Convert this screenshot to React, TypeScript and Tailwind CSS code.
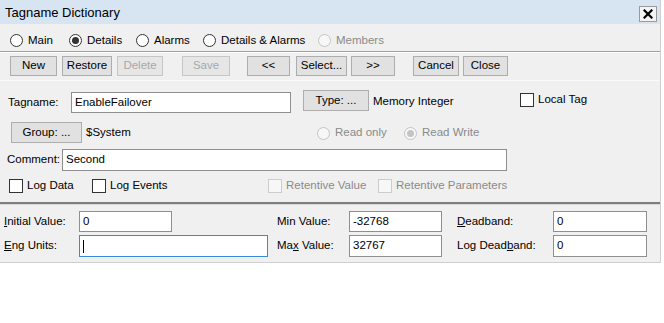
import React from "react";

function Radio({ checked = false, disabled = false, label, cls }: { checked?: boolean; disabled?: boolean; label: string; cls: string }) {
  return (
    <div className={`flex items-center ${cls}`}>
      <div
        className={
          disabled
            ? "w-[13px] h-[13px] rounded-full border border-[#c4c4c4] bg-[#f7f7f7] flex items-center justify-center"
            : "w-[13px] h-[13px] rounded-full border border-[#333333] bg-white flex items-center justify-center"
        }
      >
        {checked && (
          <div className={disabled ? "w-[7px] h-[7px] rounded-full bg-[#c4c4c4]" : "w-[7px] h-[7px] rounded-full bg-[#333333]"} />
        )}
      </div>
      <span className={disabled ? "ml-[5px] text-[#8a8a8a]" : "ml-[5px] text-black"}>{label}</span>
    </div>
  );
}

function Check({ disabled = false, label, cls }: { disabled?: boolean; label: string; cls: string }) {
  return (
    <div className={`flex items-center ${cls}`}>
      <div
        className={
          disabled
            ? "w-[14px] h-[14px] border border-[#cccccc] bg-[#f7f7f7]"
            : "w-[14px] h-[14px] border border-[#333333] bg-white"
        }
      />
      <span className={disabled ? "ml-[4px] text-[#8a8a8a]" : "ml-[4px] text-black"}>{label}</span>
    </div>
  );
}

function Btn({ label, cls, disabled = false }: { label: string; cls: string; disabled?: boolean }) {
  return (
    <div
      className={
        disabled
          ? `h-[20px] border border-[#c6c6c6] bg-[#e6e6e6] text-[#a8a8a8] flex items-center justify-center ${cls}`
          : `h-[20px] border border-[#adadad] bg-[#e1e1e1] text-black flex items-center justify-center ${cls}`
      }
    >
      {label}
    </div>
  );
}

function Field({ value, cls, focus = false }: { value?: string; cls: string; focus?: boolean }) {
  return (
    <div
      className={
        focus
          ? `border border-[#3b8ad8] bg-white flex items-center pl-[3px] ${cls}`
          : `border border-[#8f8f8f] bg-white flex items-center pl-[3px] ${cls}`
      }
    >
      {focus ? <div className="w-px h-[13px] bg-black" /> : <span className="text-black">{value}</span>}
    </div>
  );
}

export default function App() {
  return (
    <div className="w-[664px] h-[323px] bg-white font-['Liberation_Sans',Arial,sans-serif] text-[11.5px] text-black leading-none">
      <div className="w-[661px] bg-[#f0f0f0] border-r border-[#d0d0d0]">
        {/* Title bar */}
        <div className="h-[24px] bg-[#d7e4f2] flex items-center pl-[5px]">
          <span className="text-[13px]">Tagname Dictionary</span>
          <div className="ml-auto mr-[3px] mt-[4px] w-[18px] h-[16px] border border-[#9a9a9a] bg-[#f4f4f4] flex items-center justify-center">
            <svg width="10" height="10" viewBox="0 0 10 10">
              <path d="M1.5 1.5 L8.5 8.5 M8.5 1.5 L1.5 8.5" stroke="#000" strokeWidth="2.2" strokeLinecap="square" />
            </svg>
          </div>
        </div>

        {/* Radio row */}
        <div className="h-[27px] pt-[6px] pl-[10px] flex items-center">
          <Radio label="Main" cls="w-[59px]" />
          <Radio label="Details" checked cls="w-[67px]" />
          <Radio label="Alarms" cls="w-[67px]" />
          <Radio label="Details & Alarms" cls="w-[115px]" />
          <Radio label="Members" disabled cls="" />
        </div>
        <div className="h-px bg-[#a0a0a0]" />
        <div className="h-px bg-white" />

        {/* Buttons */}
        <div className="h-[27px] pt-[3px] flex items-start">
          <Btn label="New" cls="w-[47px] ml-[10px]" />
          <Btn label="Restore" cls="w-[50px] ml-[5px]" />
          <Btn label="Delete" disabled cls="w-[46px] ml-[5px]" />
          <Btn label="Save" disabled cls="w-[48px] ml-[19px]" />
          <Btn label="<<" cls="w-[43px] ml-[17px]" />
          <Btn label="Select..." cls="w-[51px] ml-[6px]" />
          <Btn label=">>" cls="w-[44px] ml-[4px]" />
          <Btn label="Cancel" cls="w-[46px] ml-[18px]" />
          <Btn label="Close" cls="w-[45px] ml-[4px]" />
        </div>
        <div className="h-px bg-[#fafafa]" />

        {/* Tagname row */}
        <div className="mt-[9px] h-[23px] flex items-start">
          <span className="ml-[8px] mt-[7px] w-[63px]">Tagname:</span>
          <Field value="EnableFailover" cls="mt-[2px] w-[220px] h-[21px]" />
          <Btn label="Type: ..." cls="ml-[12px] w-[66px] !h-[21px]" />
          <span className="ml-[4px] mt-[6px] w-[147px]">Memory Integer</span>
          <Check label="Local Tag" cls="mt-[3px]" />
        </div>

        {/* Group row */}
        <div className="mt-[9px] h-[21px] flex items-center">
          <Btn label="Group: ..." cls="ml-[11px] w-[71px] !h-[21px]" />
          <span className="ml-[4px] w-[231px]">$System</span>
          <Radio label="Read only" disabled cls="w-[87px] mt-[1px]" />
          <Radio label="Read Write" disabled checked cls="mt-[1px]" />
        </div>

        {/* Comment row */}
        <div className="mt-[6px] h-[22px] flex items-center">
          <span className="ml-[7px] w-[55px]">Comment:</span>
          <Field value="Second" cls="w-[445px] h-[22px]" />
        </div>

        {/* Checkbox row */}
        <div className="mt-[8px] h-[14px] flex items-center">
          <Check label="Log Data" cls="ml-[9px] w-[83px]" />
          <Check label="Log Events" cls="w-[176px]" />
          <Check label="Retentive Value" disabled cls="w-[110px]" />
          <Check label="Retentive Parameters" disabled cls="" />
        </div>

        {/* Thick separator */}
        <div className="mt-[9px] h-[2px] bg-[#7d7d7d]" />
        <div className="h-px bg-[#d9d9d9]" />

        {/* Bottom section */}
        <div className="pt-[6px] pb-[5px] border-b border-[#cfcfcf]">
          <div className="h-[21px] flex items-center">
            <span className="ml-[4px] w-[75px]">
              <span className="underline">I</span>nitial Value:
            </span>
            <Field value="0" cls="w-[93px] h-[21px]" />
            <span className="ml-[105px] w-[72px]">Min Value:</span>
            <Field value="-32768" cls="w-[93px] h-[21px]" />
            <span className="ml-[15px] w-[96px]">
              <span className="underline">D</span>eadband:
            </span>
            <Field value="0" cls="w-[94px] h-[21px]" />
          </div>
          <div className="mt-[3px] h-[22px] flex items-center">
            <span className="ml-[4px] w-[75px]">
              <span className="underline">E</span>ng Units:
            </span>
            <Field focus cls="w-[189px] h-[22px]" />
            <span className="ml-[9px] w-[72px]">
              Ma<span className="underline">x</span> Value:
            </span>
            <Field value="32767" cls="w-[93px] h-[22px]" />
            <span className="ml-[15px] w-[96px]">
              Log Dead<span className="underline">b</span>and:
            </span>
            <Field value="0" cls="w-[94px] h-[22px]" />
          </div>
        </div>
      </div>
    </div>
  );
}
